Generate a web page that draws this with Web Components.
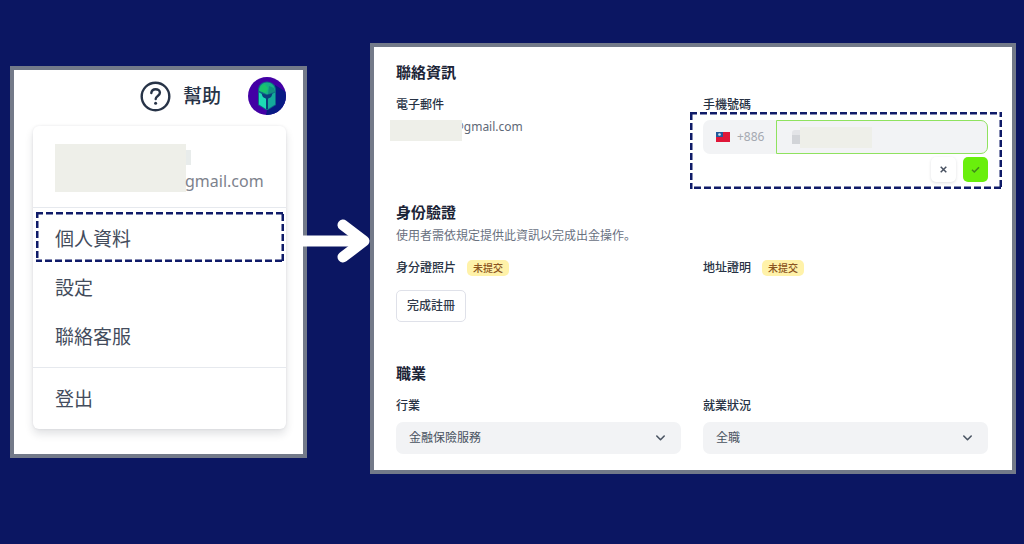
<!DOCTYPE html>
<html lang="zh-Hant">
<head>
<meta charset="utf-8">
<meta name="viewport" content="width=device-width, initial-scale=1">
<title>個人資料</title>
<style>
  body { margin: 0; min-height: 100vh; background: #0b1662; font-family: "Noto Sans", "Noto Sans CJK JP", sans-serif; font-feature-settings: "locl" 0; color: #1f2a3d; }
</style>
</head>
<body>
<guide-page></guide-page>
<script>
const define = (name, html, setup) => customElements.define(name, class extends HTMLElement {
  connectedCallback() {
    if (this.shadowRoot) return;
    const t = document.createElement('template');
    t.innerHTML = `<style>*{box-sizing:border-box} button,input,select{font:inherit;font-feature-settings:inherit;color:inherit;margin:0}</style>` + html;
    this.attachShadow({ mode: 'open' }).append(t.content.cloneNode(true));
    if (setup) setup(this, this.shadowRoot);
  }
});

define('guide-panel', `
<style>:host{display:block;box-sizing:border-box;background:#fff;border:4px solid #737a89}</style>
<slot></slot>`);

define('guide-arrow', `
<style>:host{display:block} svg{display:block;width:100%;height:44px}</style>
<svg viewBox="0 0 67 44" fill="none" stroke="#fff" aria-hidden="true">
  <path d="M0 22H56" stroke-width="11"/>
  <path d="M40 6 61 22 40 38" stroke-width="11" stroke-linecap="round" stroke-linejoin="round"/>
</svg>`);

define('dash-frame', `
<style>:host{display:block;pointer-events:none} svg{display:block;width:100%;height:100%;overflow:hidden}</style>
<svg aria-hidden="true"><rect width="100%" height="100%" fill="none" stroke="#0f1b68" stroke-width="5" stroke-dasharray="7 3"/></svg>`);

define('user-avatar', `
<style>:host{display:block;width:38px;height:38px} svg{display:block;width:100%;height:100%}</style>
<svg viewBox="0 0 38 38" aria-hidden="true">
  <defs><clipPath id="c"><circle cx="19" cy="19" r="19"/></clipPath></defs>
  <g clip-path="url(#c)">
    <path fill="#4300a5" d="M0 0h38v38H0z"/>
    <path fill="#081b84" d="M27 8 38 15V38H18l1-5 8-5z"/>
    <path fill="#0d6a86" d="M19 4.500c-5 0-9 3.500-9 9V28l8 5h2l8-5V13.500c0-5.500-4-9-9-9z"/>
    <path fill="#17b087" d="M19 5.500c-4.500 0-8 3-8 8l8 4 8-4c0-5-3.500-8-8-8z"/>
    <path fill="#19c46c" d="M11.500 12c1-3 3-4.500 5.500-5l3 4-2 5-6.500-2z"/>
    <path fill="#128f80" d="M21 9l5 2 1 4-7 2z"/>
    <path fill="#1ddbb5" d="M11 15.500l3 1.500 1 3 3 1.500V32l-7-4.500z"/>
    <path fill="#14ab9b" d="M27 15.500l-3 1.500-1 3-3 1.500V32l7-4.500z"/>
    <path fill="#0b3f7c" d="M13.500 16.500l5.500 1.500 5.500-1.500-1.500 3.500-3 1.500V32h-2V21.500L15 20z"/>
  </g>
</svg>`);

define('panel-header', `
<style>
  :host{display:flex;justify-content:flex-end;align-items:center}
  button{display:flex;align-items:center;gap:12px;margin-right:27px;padding:0;border:0;background:none;font-size:19px;font-weight:500;line-height:28px;color:#273347}
  svg{display:block;width:31px;height:31px}
</style>
<button type="button">
  <svg viewBox="0 0 31 31" fill="none" stroke="#273347" stroke-width="2.400" aria-hidden="true">
    <circle cx="15.500" cy="15.500" r="13.800"/>
    <path d="M11.300 12c.3-2.500 2-3.800 4.300-3.800 2.500 0 4.300 1.500 4.300 3.600 0 3.300-4.200 3.200-4.200 6.200" stroke-linecap="round"/>
    <circle cx="15.600" cy="22.200" r="1.500" fill="#273347" stroke="none"/>
  </svg>幫助</button>
<user-avatar></user-avatar>`);

define('menu-item', `
<style>
  :host{display:block;position:relative}
  a{display:flex;align-items:center;height:49px;padding:0 22px;font-size:19px;color:#434c5c;text-decoration:none}
  dash-frame{position:absolute;inset:-1px 2px 0 3px}
</style>
<a href="#"><slot></slot></a>`, (host, root) => {
  if (host.hasAttribute('highlight')) root.append(document.createElement('dash-frame'));
});

define('account-menu', `
<style>
  :host{display:block;box-sizing:border-box;border-radius:6px;background:#fff;box-shadow:0 5px 8px rgba(20,30,50,.13),0 0 3px rgba(20,30,50,.08)}
  .user{display:flex;align-items:flex-start;height:81px;padding:18px 22px 0}
  .mask{flex:none;width:131px;height:48px;background:#eeefe9}
  .bit{flex:none;width:5px;height:15px;margin:6px -6px 0 0;background:#e8eceb}
  .mail{margin-top:25px;font-size:16px;line-height:24px;color:#7d828d}
  nav{border-top:1px solid #e6e9ee;padding:5px 0 7px}
</style>
<div class="user"><span class="mask"></span><span class="bit"></span><span class="mail">gmail.com</span></div>
<nav><menu-item highlight>個人資料</menu-item><menu-item>設定</menu-item><menu-item>聯絡客服</menu-item></nav>
<nav><menu-item>登出</menu-item></nav>`);

define('form-section', `
<style>
  :host{display:block}
  h2{margin:0;font-size:15px;line-height:22px;font-weight:700;color:#1b2436}
  p{margin:5px 0 0;font-size:12px;line-height:16px;color:#69717f}
  p:empty{display:none}
  .grid{display:grid;grid-template-columns:1fr 1fr;gap:22px;margin-top:14px}
  p:not(:empty) + .grid{margin-top:16px}
</style>
<h2></h2><p></p><div class="grid"><slot></slot></div>`, (host, root) => {
  root.querySelector('h2').textContent = host.getAttribute('heading');
  root.querySelector('p').textContent = host.getAttribute('note') || '';
});

define('email-field', `
<style>
  :host{display:block;font-size:12px;line-height:16px}
  h3{margin:0;font:inherit;font-weight:500;color:#273244}
  div{display:flex;margin:7px 0 0 -6px;color:#606977;line-height:14px}
  .mask{position:relative;width:72px;height:21px;margin-right:-9px;background:#eeefe9}
</style>
<h3>電子郵件</h3><div><span class="mask"></span><span>@gmail.com</span></div>`);

define('phone-field', `
<style>
  :host{display:block;position:relative;font-size:12px;line-height:16px}
  label{display:block;font-weight:500;color:#273244}
  .row{display:flex;height:34px;margin-top:7px;position:relative}
  .code{display:flex;align-items:center;gap:7px;width:73px;padding-left:13px;background:#f2f3f5;border-radius:7px 0 0 7px;color:#a5a9b1}
  .code svg{display:block;width:14px;height:10px}
  .box{flex:1;min-width:0;position:relative}
  input{display:block;width:100%;height:100%;border:1px solid #8fe25f;border-radius:0 7px 7px 0;background:#f2f3f5;padding:0 16px;outline:0}
  .mask{position:absolute;left:24px;top:7px;width:72px;height:21px;background:#eeefe9}
  .bit{position:absolute;left:16px;top:10px;width:8px;height:14px;border-radius:3px 0 0 0;background:linear-gradient(#e3e4e7 5px,#d2d4d8 5px)}
  .acts{display:flex;justify-content:flex-end;gap:7px;margin-top:3px}
  button{display:grid;place-items:center;width:25px;height:25px;padding:0;border:0;border-radius:5px;background:#fff;box-shadow:0 1px 3px rgba(20,30,50,.14)}
  button svg{width:9px;height:9px}
  .ok{background:#69ef0c;box-shadow:none}
  dash-frame{position:absolute;inset:15px -14px -7px -13px}
</style>
<label for="phone">手機號碼</label>
<div class="row">
  <span class="code"><svg viewBox="0 0 14 10" aria-hidden="true"><path fill="#df1638" d="M0 0h14v10H0z"/><path fill="#21589a" d="M0 0h7v5H0z"/><circle cx="3.500" cy="2.500" r="1.300" fill="#d5e5f0"/></svg>+886</span>
  <span class="box"><input id="phone" type="tel"><span class="bit"></span><span class="mask"></span></span>
</div>
<div class="acts">
  <button type="button" aria-label="取消"><svg viewBox="0 0 9 9" fill="none" stroke="#485160" stroke-width="1.500" aria-hidden="true"><path d="M1.700 1.700 7.300 7.300M7.300 1.700 1.700 7.300"/></svg></button>
  <button type="button" class="ok" aria-label="確認"><svg viewBox="0 0 9 9" fill="none" stroke="#40891b" stroke-width="1.500" aria-hidden="true"><path d="M1 4.800 3.300 7 8 2.200"/></svg></button>
</div>
<dash-frame></dash-frame>`);

define('document-field', `
<style>
  :host{display:block;font-size:12px;line-height:16px}
  div{display:flex;align-items:center;gap:11px}
  h3{margin:0;font:inherit;font-weight:500;color:#273244}
  span{padding:0 6px;border-radius:5px;background:#fff2a9;color:#8b5522;font-size:10px;font-weight:500}
</style>
<div><h3></h3><span>未提交</span></div><slot></slot>`, (host, root) => {
  root.querySelector('h3').textContent = host.getAttribute('label');
});

define('plain-button', `
<style>
  :host{display:block;margin-top:14px}
  button{height:32px;padding:0 10px;border:1px solid #dfe1e9;border-radius:5px;background:#fff;font-size:12px;font-weight:500;color:#303a4b}
</style>
<button type="button"><slot></slot></button>`);

define('select-field', `
<style>
  :host{display:block;font-size:12px;line-height:16px}
  label{display:block;font-weight:500;color:#273244}
  div{position:relative;margin-top:8px}
  select{appearance:none;display:block;width:100%;height:32px;padding:0 36px 0 13px;border:0;border-radius:7px;background:#f2f3f5;color:#495260}
  svg{position:absolute;right:15px;top:11px;width:11px;height:10px;pointer-events:none}
</style>
<label for="s"></label>
<div><select id="s"><option></option></select>
<svg viewBox="0 0 11 10" fill="none" stroke="#4b5563" stroke-width="1.600" stroke-linecap="round" stroke-linejoin="round" aria-hidden="true"><path d="M1.800 3 5.500 6.700 9.200 3"/></svg></div>`, (host, root) => {
  root.querySelector('label').textContent = host.getAttribute('label');
  root.querySelector('option').textContent = host.getAttribute('value');
});

define('guide-page', `
<style>
  :host{display:grid;grid-template-columns:minmax(0,297fr) 63px minmax(0,646fr);align-items:start;padding:43px 8px 43px 10px}
  .menu{margin-top:23px;padding:7px 17px 25px 19px}
  account-menu{margin-top:11px}
  guide-arrow{position:relative;margin:176px 0 0 -4px}
  .form{padding:14px 24px 16px 22px}
  .verify{margin-top:19px}
  .work{margin-top:40px}
</style>
<guide-panel class="menu"><panel-header></panel-header><account-menu></account-menu></guide-panel>
<guide-arrow></guide-arrow>
<guide-panel class="form">
  <form-section heading="聯絡資訊"><email-field></email-field><phone-field></phone-field></form-section>
  <form-section class="verify" heading="身份驗證" note="使用者需依規定提供此資訊以完成出金操作。">
    <document-field label="身分證照片"><plain-button>完成註冊</plain-button></document-field>
    <document-field label="地址證明"></document-field>
  </form-section>
  <form-section class="work" heading="職業"><select-field label="行業" value="金融保險服務"></select-field><select-field label="就業狀況" value="全職"></select-field></form-section>
</guide-panel>`);
</script>
</body>
</html>
